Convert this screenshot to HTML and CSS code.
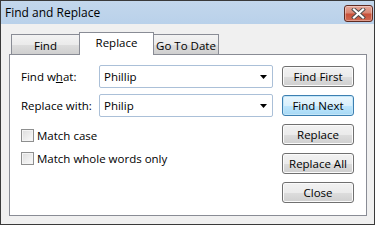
FILE: index.html
```html
<!DOCTYPE html>
<html>
<head>
<meta charset="utf-8">
<link rel="stylesheet" href="styles.css">
</head>
<body>
<div class="window">
  <div class="titlebar">
    <span class="title">Find and Replace</span>
    <div class="close-x">
      <svg width="15" height="11" viewBox="0 0 15 11">
        <path d="M3 1.5 L12 9.5 M12 1.5 L3 9.5" stroke="#4a4a4a" stroke-width="4" stroke-linecap="square" fill="none"/>
        <path d="M3 1.5 L12 9.5 M12 1.5 L3 9.5" stroke="#ffffff" stroke-width="2.2" stroke-linecap="square" fill="none"/>
      </svg>
    </div>
  </div>
  <div class="client">
    <div class="tabs">
      <div class="tab tab-find">Find</div>
      <div class="tab tab-active">Replace</div>
      <div class="tab tab-date">Go To Date</div>
    </div>
    <div class="panel">
      <div class="form">
        <div class="row">
          <span class="label">Find w<u>h</u>at:</span>
          <div class="combo"><span>Phillip</span><svg class="arrow" width="7" height="4" viewBox="0 0 7 4"><polygon points="0,0 7,0 3.5,4" fill="#000"/></svg></div>
        </div>
        <div class="row">
          <span class="label">Replace with:</span>
          <div class="combo"><span>Philip</span><svg class="arrow" width="7" height="4" viewBox="0 0 7 4"><polygon points="0,0 7,0 3.5,4" fill="#000"/></svg></div>
        </div>
        <div class="check first"><span class="box"></span><span>Match case</span></div>
        <div class="check"><span class="box"></span><span>Match whole words only</span></div>
      </div>
      <div class="buttons">
        <div class="btn">Find First</div>
        <div class="btn default">Find Next</div>
        <div class="btn">Replace</div>
        <div class="btn">Replace All</div>
        <div class="btn">Close</div>
      </div>
    </div>
  </div>
</div>
</body>
</html>
```
FILE: styles.css
```css
html, body {
  margin: 0;
  padding: 0;
}
body {
  font-family: "Open Sans", "Noto Sans", sans-serif;
  font-size: 11.5px;
  color: #000;
}
.window {
  width: 375px;
  height: 225px;
  box-sizing: border-box;
  border: 1px solid #3a3a3a;
  background: #f0f0f0;
  display: flex;
  flex-direction: column;
}
.titlebar {
  height: 23px;
  background: linear-gradient(#c3d7ec, #b9d1ea);
  display: flex;
  align-items: flex-start;
  justify-content: space-between;
}
.title {
  font-size: 12px;
  margin-left: 4px;
  margin-top: 3px;
  line-height: 17px;
}
.close-x {
  width: 27px;
  height: 15px;
  margin-top: 4px;
  margin-right: 1px;
  border: 1px solid #5e2b22;
  border-radius: 3px;
  background: linear-gradient(#e5a799 0%, #d98774 45%, #c8503a 55%, #cf6a52 100%);
  display: flex;
  align-items: center;
  justify-content: center;
  box-shadow: inset 0 0 0 1px rgba(255,255,255,0.35);
}
.client {
  flex: 1;
  padding: 8px 7px 0 8px;
  display: flex;
  flex-direction: column;
}
.tabs {
  display: flex;
  align-items: flex-end;
  margin-left: 2px;
  margin-bottom: -1px;
  position: relative;
  z-index: 1;
}
.tab {
  box-sizing: border-box;
  height: 21px;
  border: 1px solid #898c95;
  background: linear-gradient(#f3f3f3 0%, #ebebeb 50%, #dddddd 51%, #cfcfcf 100%);
  display: flex;
  align-items: center;
  justify-content: center;
  padding-top: 1px;
}
.tab-find {
  width: 69px;
}
.tab-active {
  width: 75px;
  height: 23px;
  margin-left: -1px;
  background: #fff;
  border-bottom: none;
  padding-top: 0;
  padding-bottom: 4px;
}
.tab-date {
  width: 66px;
  margin-left: -1px;
}
.panel {
  box-sizing: border-box;
  width: 358px;
  height: 162px;
  border: 1px solid #898c95;
  background: #fff;
  padding: 10px 12px 0 11px;
  display: flex;
  justify-content: space-between;
}
.form {
  display: flex;
  flex-direction: column;
}
.row {
  display: flex;
  align-items: center;
  height: 23px;
  margin-bottom: 6px;
}
.label {
  width: 78px;
}
.combo {
  box-sizing: border-box;
  width: 174px;
  height: 23px;
  border: 1px solid #abc0d8;
  border-radius: 2px;
  display: flex;
  align-items: center;
  justify-content: space-between;
  padding: 0 5px 0 4px;
  background: #fff;
}
.arrow {
  display: block;
  margin-top: 1px;
}
.check {
  display: flex;
  align-items: center;
  height: 17px;
  margin-bottom: 6px;
}
.check.first {
  margin-top: 4px;
}
.box {
  box-sizing: border-box;
  width: 13px;
  height: 13px;
  border: 1px solid #8e8f8f;
  background: linear-gradient(135deg, #dcdcdc, #fbfbfb);
  box-shadow: inset 0 0 0 1px #f4f4f4;
  margin-right: 3px;
}
.buttons {
  display: flex;
  flex-direction: column;
  gap: 8px;
  margin-top: 1px;
}
.btn {
  box-sizing: border-box;
  width: 72px;
  height: 21px;
  border: 1px solid #707070;
  border-radius: 3px;
  background: linear-gradient(#f2f2f2 0%, #ebebeb 50%, #dddddd 51%, #cfcfcf 100%);
  box-shadow: inset 0 0 0 1px #fbfbfb;
  display: flex;
  align-items: center;
  justify-content: center;
  padding-bottom: 1px;
}
.btn.default {
  border-color: #3c7fb1;
  background: linear-gradient(#eaf6fd 0%, #d9f0fc 50%, #bee6fd 51%, #a7d9f5 100%);
  box-shadow: inset 0 0 0 1px #c3e6f8;
}
```
